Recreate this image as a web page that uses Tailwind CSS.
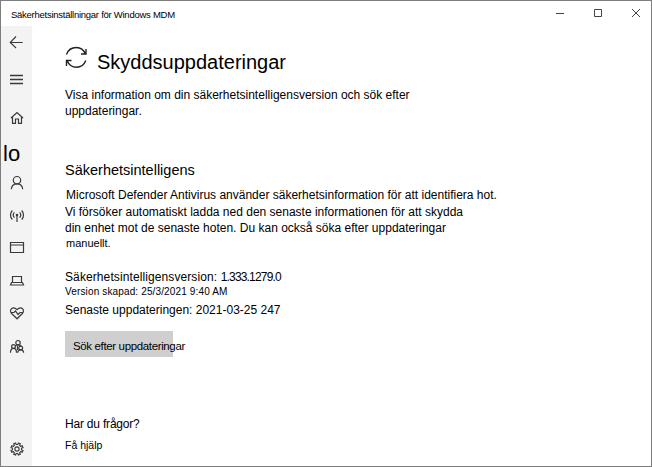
<!DOCTYPE html>
<html lang="sv">
<head>
<meta charset="utf-8">
<title>Säkerhetsinställningar för Windows MDM</title>
<script src="https://cdn.jsdelivr.net/npm/@tailwindcss/browser@4"></script>
</head>
<body class="bg-white">
<div class="flex h-[467px] w-[652px] flex-col overflow-hidden border border-[#7d7d7d] bg-white font-['Liberation_Sans',Arial,sans-serif] text-xs leading-4 whitespace-nowrap text-black">
  <header class="flex h-[25px] shrink-0 items-center justify-between pr-[10px] pl-[10px]">
    <h1 class="mt-[3px] text-[9.5px] leading-3 tracking-[-0.26px]">Säkerhetsinställningar för Windows MDM</h1>
    <div class="flex gap-[28px] pb-[2px] text-[#444]">
      <svg class="size-[10px]" viewBox="0 0 10 10" fill="none" stroke="currentColor"><path d="M1 5.5h8"/></svg>
      <svg class="size-[10px]" viewBox="0 0 10 10" fill="none" stroke="currentColor"><path d="M1.500 1.500h7v7h-7z"/></svg>
      <svg class="size-[10px]" viewBox="0 0 10 10" fill="none" stroke="currentColor"><path d="m1 1 8 8M9 1 1 9"/></svg>
    </div>
  </header>
  <div class="flex min-h-0 flex-1">
    <nav class="flex w-[31px] shrink-0 flex-col bg-[#f3f3f3] pt-2 pl-2 text-[#3a3a3a]">
      <svg class="size-4 shrink-0" viewBox="0 0 16 16" fill="none" stroke="currentColor" stroke-width="1.1"><path d="M1.200 8.500h12.500M7 2.500 1.200 8.500 7 14"/></svg>
      <svg class="mt-[21px] size-4 shrink-0" viewBox="0 0 16 16" fill="none" stroke="currentColor" stroke-width="1.400"><path d="M1 4.500h13M1 8.500h13M1 12.500h13"/></svg>
      <svg class="mt-[23px] size-4 shrink-0" viewBox="0 0 16 16" fill="none" stroke="currentColor" stroke-width="1.200"><path d="m2 8 6-5.500L14 8M3.500 7v6.300h3V9h3v4.300h3V7"/></svg>
      <span class="mt-[14px] -ml-1.5 h-7 text-[22px] leading-7 text-black">lo</span>
      <svg class="mt-[7px] size-4 shrink-0" viewBox="0 0 16 16" fill="none" stroke="currentColor" stroke-width="1.200"><circle cx="8" cy="5.200" r="3.700"/><path d="M2.300 14.200c.3-3.300 2.600-5.300 5.700-5.300s5.400 2 5.700 5.300"/></svg>
      <svg class="mt-4 size-4 shrink-0" viewBox="0 0 16 16" fill="none" stroke="currentColor" stroke-width="1.200"><path d="M8 8.500V15M5.400 10.600a3.800 3.800 0 0 1 0-5.200M10.600 10.600a3.800 3.800 0 0 0 0-5.200M3.300 12.500a6.500 6.500 0 0 1 0-9M12.700 12.500a6.500 6.500 0 0 0 0-9"/><circle cx="8" cy="8" r=".7"/></svg>
      <svg class="mt-[17px] size-4 shrink-0" viewBox="0 0 16 16" fill="none" stroke="currentColor" stroke-width="1.200"><path d="M1.500 2.500h13v10h-13zM1.500 5h13"/></svg>
      <svg class="mt-[17px] size-4 shrink-0" viewBox="0 0 16 16" fill="none" stroke="currentColor" stroke-width="1.200"><path d="M3.500 9.500v-6h9v6M2.500 9.500h11l1 2.500h-13z"/></svg>
      <svg class="mt-4 size-4 shrink-0" viewBox="0 0 16 16" fill="none" stroke="currentColor" stroke-width="1.200"><path d="M8 13.800 2.600 8.500C1 6.800 1.300 4.700 2.500 3.700c1.500-1.300 3.700-1 5.500 1 1.800-2 4-2.300 5.500-1 1.200 1 1.500 3.100-.1 4.800zM2 7.500h3L6.500 6l2.500 3.500 2-2h3"/></svg>
      <svg class="mt-[18px] size-4 shrink-0" viewBox="0 0 16 16" fill="none" stroke="currentColor" stroke-width="1.200"><circle cx="9" cy="3.700" r="2.200"/><circle cx="4.500" cy="7.500" r="1.900"/><circle cx="11.700" cy="9" r="1.900"/><path d="M1.500 13.800c0-2.800 1-4.400 3-4.400s3 1.600 3 4.400M8.700 13.800c.1-2 1.200-2.900 3-2.900s2.800.9 2.900 2.900M6.300 6.900c.6-.7 1.500-1 2.700-1 1.500 0 2.700.4 3.300 1.300M8.500 7v4"/></svg>
      <svg class="mt-[86px] size-4 shrink-0" viewBox="0 0 16 16" fill="none" stroke="currentColor" stroke-width="1.100" stroke-linejoin="round"><circle cx="8" cy="8" r="2.100"/><path d="m6.700 1.900.3 1.600h2l.3-1.600 2.100.9-.9 1.400 1.300 1.300 1.400-.9.900 2.100-1.600.3v2l1.600.3-.9 2.100-1.400-.9-1.300 1.300.9 1.400-2.100.9-.3-1.600H7l-.3 1.600-2.100-.9.9-1.400-1.300-1.300-1.400.9-.9-2.100 1.600-.3V7l-1.600-.3.900-2.100 1.400.9 1.300-1.300-.9-1.400z"/></svg>
    </nav>
    <main class="flex flex-col items-start pl-[33px]">
      <div class="mt-[19px] flex">
        <svg class="h-6 w-[23px]" viewBox="0 0 23 24" fill="none" stroke="#222" stroke-width="1.400"><path d="M1.500 9.500C3 5 7 2.500 11.500 2.500c4 0 7 2 9 6.500M21 4v5h-5M20.800 15.500c-1.500 4-5.300 6.700-9.300 6.700-4.200 0-7.700-2.400-9.500-6.700M1.500 21v-5.500H6.500"/></svg>
        <h2 class="mt-[3px] ml-[9px] text-xl leading-7">Skyddsuppdateringar</h2>
      </div>
      <p class="mt-[11px]">Visa information om din säkerhetsintelligensversion och sök efter<br>uppdateringar.</p>
      <h3 class="mt-[41px] text-[14.5px] leading-5">Säkerhetsintelligens</h3>
      <p class="mt-[7px] ml-px">Microsoft Defender Antivirus använder säkerhetsinformation för att identifiera hot.</p>
      <p class="mt-px">Vi försöker automatiskt ladda ned den senaste informationen för att skydda<br>din enhet mot de senaste hoten. Du kan också söka efter uppdateringar</p>
      <p class="-mt-px ml-px text-[11px]">manuellt.</p>
      <p class="mt-[18px]"><span class="tracking-[0.1px]">Säkerhetsintelligensversion: </span><span class="tracking-[-0.82px]">1.333.1279.0</span></p>
      <p class="text-[10px] leading-[14px] tracking-[0.14px]">Version skapad: 25/3/2021 9:40 AM</p>
      <p class="mt-[3px]">Senaste uppdateringen: 2021-03-25 247</p>
      <button class="mt-[13px] flex h-[26px] w-[108px] bg-[#cfcfcf] pt-[7px] pl-2 text-[11.5px] tracking-[-0.36px]">Sök efter uppdateringar</button>
      <p class="mt-[59px] tracking-[-0.2px]">Har du frågor?</p>
      <a class="mt-[6px] text-[10.5px] leading-[14px]">Få hjälp</a>
    </main>
  </div>
</div>
</body>
</html>
